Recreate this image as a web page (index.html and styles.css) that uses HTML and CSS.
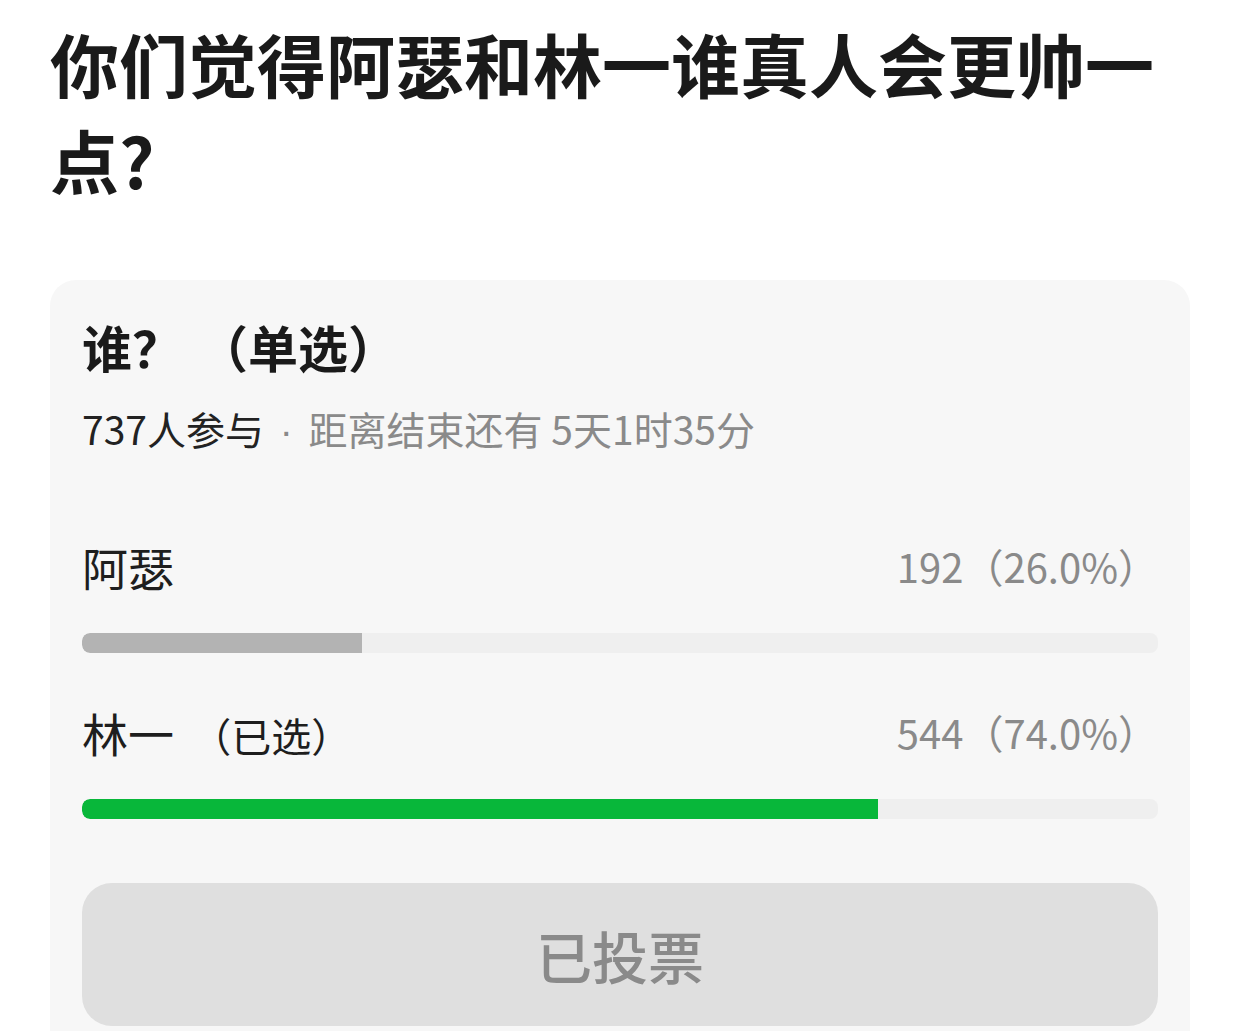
FILE: index.html
```html
<!DOCTYPE html>
<html lang="zh-CN">
<head>
<meta charset="utf-8">
<title>投票</title>
<link rel="stylesheet" href="styles.css">
</head>
<body>
<div class="page">
  <h1 class="title">你们觉得阿瑟和林一谁真人会更帅一点?</h1>
  <section class="card">
    <div class="q">谁？<span class="q-type">（单选）</span></div>
    <div class="meta"><span class="meta-count">737人参与</span><span class="sep"> · </span>距离结束还有 5天1时35分</div>
    <div class="opt opt-first">
      <div class="opt-row"><span class="opt-name">阿瑟</span><span class="opt-num">192（26.0%）</span></div>
      <div class="track"><div class="fill fill-gray" style="width:26%"></div></div>
    </div>
    <div class="opt">
      <div class="opt-row"><span class="opt-name">林一 <span class="opt-tag">（已选）</span></span><span class="opt-num">544（74.0%）</span></div>
      <div class="track"><div class="fill fill-green" style="width:74%"></div></div>
    </div>
    <div class="btn">已投票</div>
  </section>
</div>
</body>
</html>
```
FILE: styles.css
```css
html, body {
  margin: 0;
  padding: 0;
  background: #ffffff;
}
body {
  font-family: "Noto Sans CJK SC", "Noto Sans", sans-serif;
  color: #1a1a1a;
  overflow: hidden;
  height: 1031px;
}
.page {
  padding: 15px 46px 0 50px;
}
.title {
  margin: 0;
  font-size: 69px;
  line-height: 96px;
  font-weight: 700;
  color: #1a1a1a;
}
.card {
  margin-top: 73px;
  background: #f7f7f7;
  border-radius: 26px;
  padding: 36px 32px 40px 32px;
  height: 900px;
  box-sizing: border-box;
}
.q {
  font-size: 50px;
  line-height: 60px;
  font-weight: 700;
  color: #1a1a1a;
}
.q-type {
  margin-left: 16px;
}
.meta {
  margin-top: 26px;
  font-size: 39px;
  line-height: 52px;
  color: #8a8a8a;
}
.meta-count {
  color: #222222;
}
.sep {
  font-family: "Liberation Sans", sans-serif;
  padding: 0 5px;
}
.opt {
  display: flex;
  flex-direction: column;
}
.opt-first {
  margin-top: 78px;
}
.opt + .opt {
  margin-top: 49px;
}
.opt-row {
  display: flex;
  justify-content: space-between;
  align-items: center;
  height: 60px;
}
.opt-name {
  font-size: 46px;
  color: #1e1e1e;
}
.opt-tag {
  font-size: 40px;
  margin-left: 7px;
}
.opt-num {
  font-size: 40px;
  color: #8a8a8a;
}
.track {
  margin-top: 37px;
  height: 20px;
  background: #efefef;
  border-radius: 8px;
  overflow: hidden;
}
.fill {
  height: 100%;
  border-radius: 8px 0 0 8px;
}
.fill-gray {
  background: #b3b3b3;
}
.fill-green {
  background: #08b73a;
}
.btn {
  margin-top: 64px;
  height: 143px;
  background: #dfdfdf;
  border-radius: 30px;
  display: flex;
  align-items: center;
  justify-content: center;
  font-size: 56px;
  color: #8a8a8a;
  font-weight: 500;
}
```
